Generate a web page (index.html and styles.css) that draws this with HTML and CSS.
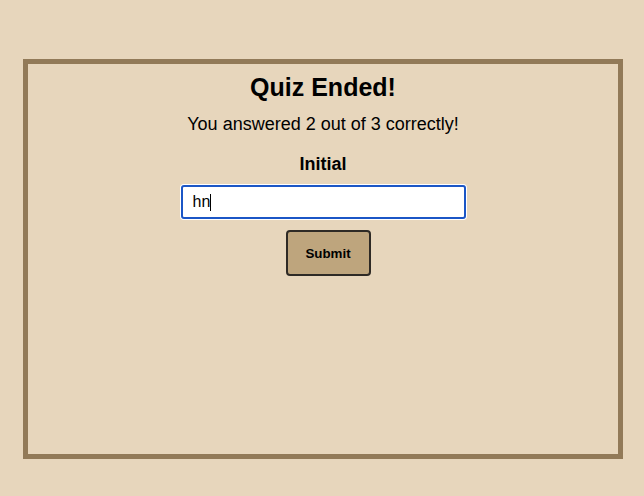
FILE: index.html
```html
<!DOCTYPE html>
<html>
<head>
<meta charset="utf-8">
<link rel="stylesheet" href="styles.css">
</head>
<body>
<div class="page">
  <div class="quiz-box">
    <h2 class="title">Quiz Ended!</h2>
    <p class="score">You answered 2 out of 3 correctly!</p>
    <label class="label" for="initial">Initial</label>
    <div class="field"><input id="initial" class="input" type="text" value="hn"><span class="caret"></span></div>
    <button class="submit">Submit</button>
  </div>
</div>
</body>
</html>
```
FILE: styles.css
```css
html, body {
  margin: 0;
  padding: 0;
  background: #e7d6bc;
  font-family: "Liberation Sans", Arial, Helvetica, sans-serif;
  color: #000;
}
.page {
  padding: 59px 21px 0 23px;
}
.quiz-box {
  width: 600px;
  height: 400px;
  box-sizing: border-box;
  border: 5px solid #927a58;
  display: flex;
  flex-direction: column;
  align-items: center;
}
.title {
  margin: 10px 0 0;
  font-size: 25px;
  font-weight: bold;
  line-height: 27px;
}
.score {
  margin: 13px 0 0;
  font-size: 18px;
  line-height: 21px;
}
.label {
  margin-top: 19px;
  font-size: 18px;
  font-weight: bold;
  line-height: 21px;
}
.field {
  margin-top: 10px;
  position: relative;
}
.input {
  display: block;
  width: 285px;
  height: 34px;
  box-sizing: border-box;
  border: 2px solid #1b56c6;
  border-radius: 3px;
  background: #fff;
  box-shadow: 0 0 0 1px #ffffff;
  padding: 0 10px;
  font-family: "Liberation Sans", Arial, Helvetica, sans-serif;
  font-size: 16px;
  color: #000;
  outline: none;
}
.caret {
  position: absolute;
  left: 29px;
  top: 9px;
  width: 1px;
  height: 17px;
  background: #000;
}
.submit {
  margin-top: 11px;
  margin-left: 10px;
  width: 85px;
  height: 46px;
  box-sizing: border-box;
  background: #bea57d;
  border: 2px solid #2e2a25;
  border-radius: 4px;
  font-family: "Liberation Sans", Arial, Helvetica, sans-serif;
  font-size: 13.33px;
  font-weight: bold;
  color: #000;
  padding: 0;
}
```
